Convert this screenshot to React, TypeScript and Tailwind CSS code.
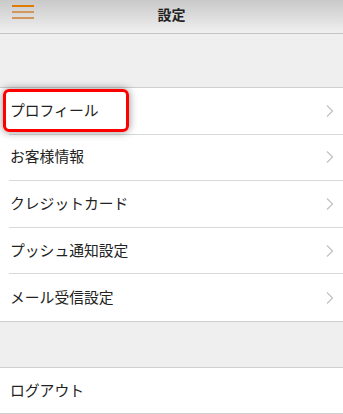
import React from "react";

const items = ["プロフィール", "お客様情報", "クレジットカード", "プッシュ通知設定", "メール受信設定"];

function Chevron() {
  return (
    <svg width="8" height="14" viewBox="0 0 8 14" className="shrink-0">
      <path d="M1 1.5 L6.5 7 L1 12.5" fill="none" stroke="#c4c4c4" strokeWidth="1.3" />
    </svg>
  );
}

export default function App() {
  return (
    <div
      className="relative w-[343px] h-[414px] overflow-hidden bg-[#efefef] text-[#222]"
      style={{ fontFamily: '"Noto Sans CJK JP", "Noto Sans", sans-serif' }}
    >
      <div className="relative h-[34px] border-b border-[#c4c4c4] bg-gradient-to-b from-[#c9c9c9] to-[#f0f0f0] flex items-center justify-center">
        <div className="absolute left-[12px] top-[5px] flex flex-col gap-[4px]">
          <div className="w-[22px] h-[2px] bg-[#e07a00]" />
          <div className="w-[22px] h-[2px] bg-[#d2955a]" />
          <div className="w-[22px] h-[2px] bg-[#d2955a]" />
        </div>
        <span className="text-[14px] font-bold leading-none -mt-[5px]">設定</span>
      </div>
      <div className="h-[53px]" />
      <div className="bg-white border-t border-b border-[#cfcfcf]">
        {items.map((t, i) => (
          <div key={t} className="pl-[9px]">
            <div
              className={
                "h-[46.6px] flex items-center justify-between pr-[9px] " +
                (i < items.length - 1 ? "border-b border-[#d9d9d9]" : "")
              }
            >
              <span className="pl-[1px] text-[14.8px] leading-none -mt-[1px]">{t}</span>
              <Chevron />
            </div>
          </div>
        ))}
      </div>
      <div className="h-[45px]" />
      <div className="bg-white border-t border-b border-[#cfcfcf]">
        <div className="h-[45px] flex items-center pl-[10px]">
          <span className="text-[14.8px] leading-none -mt-[1px]">ログアウト</span>
        </div>
      </div>
      <div className="absolute left-[3px] top-[89px] w-[126px] h-[43px] rounded-[6px] border-[3px] border-[#ff0000] shadow-[0_0_8px_rgba(0,0,0,0.45)]" />
    </div>
  );
}
